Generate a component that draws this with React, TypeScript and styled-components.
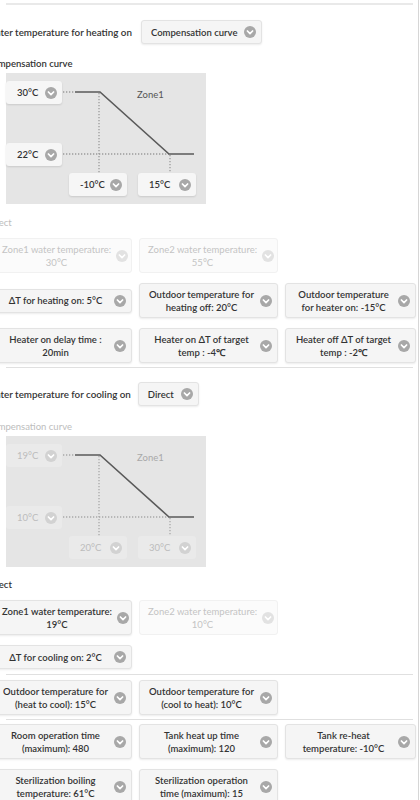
import React from "react";
import styled, { createGlobalStyle } from "styled-components";

const GlobalStyle = createGlobalStyle`
  html, body { margin: 0; padding: 0; background: #ffffff; }
  body { font-family: Lato, "Open Sans", sans-serif; }
`;

const Frame = styled.div`
  width: 418px;
  height: 800px;
  overflow: hidden;
  border-right: 1px solid #d6d6d6;
  background: #ffffff;
`;

const Content = styled.div`
  margin-left: -11px;
  width: 429px;
  font-family: Lato, "Open Sans", sans-serif;
  font-size: 9.5px;
  font-weight: 600;
  color: #333333;
`;

const Divider = styled.div<{ $top: number; $thick?: number }>`
  margin: ${(p) => p.$top}px 0 0 17px;
  width: 407px;
  height: ${(p) => p.$thick ?? 1}px;
  background: ${(p) => (p.$thick ? "#e9e9e9" : "#e0e0e0")};
`;

const SelectRow = styled.div<{ $top: number; $gap: number }>`
  display: flex;
  align-items: center;
  gap: ${(p) => p.$gap}px;
  margin: ${(p) => p.$top}px 0 0 -3px;
`;

const FieldLabel = styled.span`
  white-space: nowrap;
  line-height: 14px;
  font-size: 9.8px;
  color: #333333;
`;

const Select = styled.div`
  display: inline-flex;
  align-items: center;
  gap: 7px;
  box-sizing: border-box;
  height: 24px;
  padding: 0 5px 0 9px;
  background: #f5f5f5;
  border: 1px solid #e3e3e3;
  border-radius: 3px;
  box-shadow: 0 1px 2px rgba(0, 0, 0, 0.08);
  white-space: nowrap;
`;

const SectionLabel = styled.div<{ $top: number; $muted?: boolean }>`
  margin: ${(p) => p.$top}px 0 0 -3px;
  line-height: 14px;
  white-space: nowrap;
  color: ${(p) => (p.$muted ? "#bdbdbd" : "#333333")};
  font-weight: ${(p) => (p.$muted ? 400 : 600)};
`;

const Chart = styled.div`
  position: relative;
  margin: 2px 0 0 17px;
  width: 200px;
  height: 131px;
  background: #e5e5e5;
`;

const ChartSvg = styled.svg`
  position: absolute;
  left: 0;
  top: 0;
`;

const ChartBox = styled.div<{ $x: number; $y: number; $w: number; $muted?: boolean }>`
  position: absolute;
  left: ${(p) => p.$x}px;
  top: ${(p) => p.$y}px;
  width: ${(p) => p.$w}px;
  height: 23px;
  box-sizing: border-box;
  display: flex;
  align-items: center;
  justify-content: space-between;
  padding: 0 5px 0 11px;
  border-radius: 3px;
  background: ${(p) => (p.$muted ? "#eaeaea" : "#f6f6f6")};
  box-shadow: ${(p) => (p.$muted ? "none" : "0 1px 2px rgba(0, 0, 0, 0.12)")};
  color: ${(p) => (p.$muted ? "#bcbcbc" : "#333333")};
  font-weight: ${(p) => (p.$muted ? 400 : 600)};
  white-space: nowrap;
`;

const ZoneText = styled.span<{ $muted?: boolean }>`
  position: absolute;
  left: 131px;
  top: 15px;
  line-height: 14px;
  font-weight: 400;
  color: ${(p) => (p.$muted ? "#a9a9a9" : "#555555")};
`;

const Grid = styled.div<{ $top: number }>`
  display: grid;
  grid-template-columns: 139px 139px 131px;
  column-gap: 7px;
  row-gap: 10px;
  align-items: center;
  margin: ${(p) => p.$top}px 0 0 4px;
`;

const OptionButton = styled.div<{ $disabled?: boolean }>`
  display: flex;
  align-items: center;
  gap: 5px;
  box-sizing: border-box;
  min-height: 24px;
  padding: 3.5px 5px 3.5px 8px;
  border-radius: 3px;
  background: ${(p) => (p.$disabled ? "#fbfbfb" : "#f5f5f5")};
  border: 1px solid ${(p) => (p.$disabled ? "#f1f1f1" : "#e3e3e3")};
  box-shadow: ${(p) => (p.$disabled ? "none" : "0 1px 2px rgba(0, 0, 0, 0.08)")};
  color: ${(p) => (p.$disabled ? "#c4c4c4" : "#333333")};
  font-weight: ${(p) => (p.$disabled ? 400 : 600)};
`;

const OptionText = styled.span`
  flex: 1;
  text-align: center;
  line-height: 13px;
  white-space: pre;
`;

const Blank = styled.div``;

const ChevronSvg = styled.svg`
  flex: none;
  display: block;
`;

function Chevron({ color = "#a8a8a8" }: { color?: string }) {
  return (
    <ChevronSvg width="12" height="12" viewBox="0 0 12 12">
      <circle cx="6" cy="6" r="6" fill={color} />
      <path d="M3.4 5 L6 7.6 L8.6 5" fill="none" stroke="#ffffff" strokeWidth="1.7" strokeLinecap="round" strokeLinejoin="round" />
    </ChevronSvg>
  );
}

type Opt = { text: string; disabled?: boolean } | null;

function OptionGrid({ top, rows }: { top: number; rows: Opt[][] }) {
  return (
    <Grid $top={top}>
      {rows.flatMap((row, ri) => {
        const cells = [...row];
        while (cells.length < 3) cells.push(null);
        return cells.map((c, ci) =>
          c ? (
            <OptionButton key={`${ri}-${ci}`} $disabled={c.disabled}>
              <OptionText>{c.text}</OptionText>
              <Chevron color={c.disabled ? "#e2e2e2" : "#a8a8a8"} />
            </OptionButton>
          ) : (
            <Blank key={`${ri}-${ci}`} />
          )
        );
      })}
    </Grid>
  );
}

function CurveChart({
  yTop,
  yBottom,
  xLeft,
  xRight,
  muted,
}: {
  yTop: string;
  yBottom: string;
  xLeft: string;
  xRight: string;
  muted?: boolean;
}) {
  const dot = muted ? "#a8a8a8" : "#9a9a9a";
  const chev = muted ? "#d2d2d2" : "#a8a8a8";
  return (
    <Chart>
      <ChartSvg width="200" height="131" viewBox="0 0 200 131">
        <g fill="none" stroke={dot} strokeWidth="1.3" strokeDasharray="1.3 1.7">
          <line x1="57" y1="19" x2="69" y2="19" />
          <line x1="93" y1="20" x2="93" y2="100" />
          <line x1="57" y1="81" x2="163" y2="81" />
          <line x1="164" y1="82" x2="164" y2="100" />
        </g>
        <polyline
          points="69,19 94,19 163,81 188,81"
          fill="none"
          stroke="#5a5a5a"
          strokeWidth="1.6"
        />
      </ChartSvg>
      <ZoneText $muted={muted}>Zone1</ZoneText>
      <ChartBox $x={0} $y={8} $w={56} $muted={muted}>
        {yTop}
        <Chevron color={chev} />
      </ChartBox>
      <ChartBox $x={0} $y={70} $w={56} $muted={muted}>
        {yBottom}
        <Chevron color={chev} />
      </ChartBox>
      <ChartBox $x={63} $y={100} $w={58} $muted={muted}>
        {xLeft}
        <Chevron color={chev} />
      </ChartBox>
      <ChartBox $x={132} $y={100} $w={58} $muted={muted}>
        {xRight}
        <Chevron color={chev} />
      </ChartBox>
    </Chart>
  );
}

export default function App() {
  return (
    <>
      <GlobalStyle />
      <Frame>
        <Content>
          <Divider $top={3} $thick={2} />
          <SelectRow $top={15} $gap={9}>
            <FieldLabel>Water temperature for heating on</FieldLabel>
            <Select>
              Compensation curve
              <Chevron />
            </Select>
          </SelectRow>
          <SectionLabel $top={13}>Compensation curve</SectionLabel>
          <CurveChart yTop="30°C" yBottom="22°C" xLeft="-10°C" xRight="15°C" />
          <SectionLabel $top={12} $muted>
            Direct
          </SectionLabel>
          <OptionGrid
            top={8}
            rows={[
              [
                { text: "Zone1 water temperature:\n30°C", disabled: true },
                { text: "Zone2 water temperature:\n55°C", disabled: true },
              ],
              [
                { text: "ΔT for heating on: 5°C" },
                { text: "Outdoor temperature for\nheating off: 20°C" },
                { text: "Outdoor temperature\nfor heater on: -15°C" },
              ],
              [
                { text: "Heater on delay time :\n20min" },
                { text: "Heater on ΔT of target\ntemp : -4℃" },
                { text: "Heater off ΔT of target\ntemp : -2℃" },
              ],
            ]}
          />
          <Divider $top={4} />
          <SelectRow $top={14} $gap={7}>
            <FieldLabel>Water temperature for cooling on</FieldLabel>
            <Select>
              Direct
              <Chevron />
            </Select>
          </SelectRow>
          <SectionLabel $top={14} $muted>
            Compensation curve
          </SectionLabel>
          <CurveChart yTop="19°C" yBottom="10°C" xLeft="20°C" xRight="30°C" muted />
          <SectionLabel $top={11}>Direct</SectionLabel>
          <OptionGrid
            top={8}
            rows={[
              [
                { text: "Zone1 water temperature:\n19°C" },
                { text: "Zone2 water temperature:\n10°C", disabled: true },
              ],
              [{ text: "ΔT for cooling on: 2°C" }],
            ]}
          />
          <Divider $top={5} />
          <OptionGrid
            top={5}
            rows={[
              [
                { text: "Outdoor temperature for\n(heat to cool): 15°C" },
                { text: "Outdoor temperature for\n(cool to heat): 10°C" },
              ],
            ]}
          />
          <Divider $top={4} />
          <OptionGrid
            top={4}
            rows={[
              [
                { text: "Room operation time\n(maximum): 480" },
                { text: "Tank heat up time\n(maximum): 120" },
                { text: "Tank re-heat\ntemperature: -10°C" },
              ],
              [
                { text: "Sterilization boiling\ntemperature: 61°C" },
                { text: "Sterilization operation\ntime (maximum): 15" },
              ],
            ]}
          />
        </Content>
      </Frame>
    </>
  );
}
